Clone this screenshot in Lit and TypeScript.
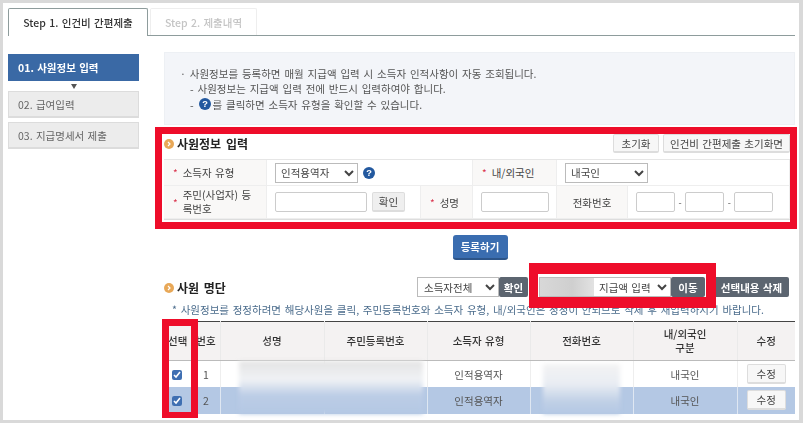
import { LitElement, html, css } from "lit";
import { customElement } from "lit/decorators.js";

const help = html`<svg class="help" viewBox="0 0 13 13" width="12" height="12"><circle cx="6.5" cy="6.5" r="6.5" fill="#23599f"/><text x="6.5" y="10.2" text-anchor="middle" font-size="10" font-weight="700" fill="#fff" font-family="Liberation Sans">?</text></svg>`;
const bullet = html`<svg class="bullet" viewBox="0 0 10 10" width="10" height="10"><circle cx="5" cy="5" r="5" fill="#e8a858"/><path d="M4 3l2 2-2 2" fill="none" stroke="#fff" stroke-width="1.2"/></svg>`;

@customElement("app-root")
export class AppRoot extends LitElement {
  static styles = css`
    :host { display: block; position: relative; width: 803px; height: 423px; overflow: hidden; background: #fff;
      font-family: "Noto Sans CJK KR", "Noto Sans", sans-serif; font-size: 10.5px; color: #555; word-spacing: 1px; }
    * { box-sizing: border-box; }
    .frame { width: 803px; height: 423px; border: solid #d9d9d9; border-width: 3px 4px 3px 3px; padding: 5px 4px 0 5px; display: flex; flex-direction: column; filter: blur(0.35px); }
    .tabs { display: flex; gap: 2px; height: 28px; border-bottom: 1px solid #8e9c9c; flex: none; }
    .tab { height: 27px; display: flex; align-items: center; justify-content: center; border: 1px solid #eee; border-bottom: 0; color: #c4c4c4; font-size: 10.5px; width: 107px; border-radius: 2px 2px 0 0; font-weight: 500; }
    .tab.on { width: 140px; height: 28px; border-color: #8e9c9c; color: #333; background: #fff; }
    .body { display: flex; gap: 25px; padding-top: 16px; flex: 1; }
    .side { width: 131px; flex: none; padding-top: 2px; display: flex; flex-direction: column; }
    .step { height: 27px; display: flex; align-items: center; padding-left: 9px; background: #ececec; border: 1px solid #dcdcdc; border-bottom-width: 2px; color: #666; font-size: 10.5px; margin-bottom: 4px; }
    .step.on { background: #3a69a5; border-color: #3a69a5; color: #fff; font-weight: 700; margin-bottom: 0; }
    .arrow { height: 10px; display: flex; justify-content: center; align-items: center; }
    .arrow i { border: 3.5px solid transparent; border-top: 5px solid #555; border-bottom: 0; width: 0; }
    .main { width: 631px; flex: none; }
    .info { height: 73px; background: #f3f5f9; border: 1px solid #edf0f4; padding: 13px 16px 0 15px; font-size: 10.5px; word-spacing: 1.5px; line-height: 15.3px; color: #555; }
    .info div { display: flex; align-items: center; white-space: pre; }
    .info .sub { padding-left: 10px; }
    .info .help { margin: 0 2px 0 1px; }
    .head { display: flex; align-items: center; height: 34px; padding-top: 3px; }
    .head h2 { margin: 0 0 0 3px; font-size: 12px; word-spacing: 2px; font-weight: 700; color: #222; flex: 1; }
    .bullet { flex: none; margin-top: 1px; }
    .gbtn { height: 19px; display: inline-flex; align-items: center; justify-content: center; background: #f7f7f7; border: 1px solid #ddd; border-bottom-width: 2px; border-radius: 2px; color: #444; font-size: 10.5px; word-spacing: 1px; font-family: inherit; padding: 0; white-space: nowrap; }
    .reset { width: 46px; margin-right: 4px; }
    .reset2 { width: 127px; margin-right: 5px; }
    .form { display: grid; grid-template-columns: 103px 154px 52px 84px 71px 162px; grid-template-rows: 26px 33px; border-top: 1px solid #e6e6e6; border-bottom: 1px solid #ddd; width: 626px; }
    .form > div { display: flex; align-items: center; border-bottom: 1px solid #eee; border-right: 1px solid #eee; }
    .form .l { background: #f9f8f7; font-size: 10.5px; color: #444; }
    .form .l.p { padding-left: 9px; gap: 5px; }
    .form .l.c { justify-content: center; }
    .form .l.star-tight { padding-left: 9px; gap: 5px; }
    .form .v { padding-left: 8px; gap: 5px; }
    .form .span2 { grid-column: span 2; }
    .star { color: #d9304a; font-size: 10px; flex: none; }
    .lbl2 { line-height: 14px; width: 72px; word-break: break-all; }
    select { font-family: inherit; font-size: 10.5px; word-spacing: 1px; height: 20px; background: #fff; border: 1px solid #bbb; color: #444; padding: 0 0 0 1px; border-radius: 0; }
    .sel1 { width: 83px; }
    .in { height: 20px; border: 1px solid #ccc; background: #fff; border-radius: 2px; flex: none; padding: 0; }
    .in1 { width: 92px; } .in2 { width: 68px; } .in3 { width: 39px; }
    .phone { gap: 3.5px !important; font-size: 9px; }
    .cbtn { width: 33px; height: 20px; background: #efefef; }
    .regwrap { display: flex; justify-content: center; padding: 15px 0 0 1px; }
    .reg { width: 55px; height: 25px; background: #3a6db0; color: #fff; font-weight: 700; font-size: 10.5px; border: 0; border-bottom: 2px solid #2c5488; border-radius: 3px; font-family: inherit; padding: 0; word-spacing: 1px; }
    .bar { display: flex; align-items: center; height: 20px; margin-top: 17px; }
    .bar .t { display: flex; align-items: center; gap: 3px; width: 253px; flex: none; }
    .bar h2 { margin: 0; font-size: 12px; word-spacing: 2px; font-weight: 700; color: #222; }
    .dbtn { height: 20px; background: #5c6570; color: #fff; border: 0; border-radius: 2px; font-family: inherit; font-weight: 700; font-size: 10.5px; word-spacing: 1px; padding: 0; }
    .s1 { width: 82px; height: 20px; padding-left: 2px; }
    .ok { width: 29px; margin-right: 11px; }
    .s2 { width: 132px; height: 20px; padding-left: 55px; }
    .selwrap { position: relative; display: flex; }
    .smudge { position: absolute; left: 1px; top: 1px; width: 54px; height: 18px; background: linear-gradient(90deg, #d8d8d8, #cfcfcf 60%, #e2e2e2); }
    .go { width: 34px; margin-right: 9px; }
    .del { width: 75px; }
    .note { color: #4b6c8c; font-size: 10.5px; word-spacing: 1.4px; margin: 5px 0 0 8px; height: 19px; line-height: 16px; white-space: nowrap; }
    .tw { position: relative; }
    table { border-collapse: collapse; width: 631px; table-layout: fixed; border-top: 1px solid #444; }
    th { height: 39px; background: #f4f2f2; font-weight: 500; font-size: 10.5px; color: #333; border-right: 1px solid #eaeaea; border-bottom: 1px solid #bbb; line-height: 14px; padding: 0; }
    th:last-child, td:last-child { border-right: 0; }
    td { height: 26.5px; text-align: center; font-size: 10.5px; color: #555; border-right: 1px solid #eee; padding: 0; }
    tr.sel td { background: #b4c8e4; border-right-color: #dfe7f2; }
    input[type="checkbox"] { width: 10px; height: 10px; margin: 0 2px 2px 0; accent-color: #3f6fb2; vertical-align: middle; }
    .edit { width: 39px; height: 20px; }
    .blur { position: absolute; filter: blur(2px); pointer-events: none; }
    .b1 { left: 75px; top: 40px; width: 184px; height: 53px; background: linear-gradient(180deg, #e4e4e4 0%, #f0f2f5 35%, #bccde6 65%, #b4c8e4 100%); }
    .b2 { left: 379px; top: 43px; width: 77px; height: 50px; background: linear-gradient(180deg, #f3f3f3 0%, #e9edf3 40%, #c0d0e6 75%, #b4c8e4 100%); }
    .redbox { position: absolute; border-style: solid; border-color: #ee0d2a; pointer-events: none; }
    .r1 { left: 155px; top: 127px; width: 642px; height: 102px; border-width: 7px; }
    .r2 { left: 529px; top: 263px; width: 187px; height: 45px; border-width: 11px 10px 11px 9px; }
    .r3 { left: 162px; top: 319px; width: 36px; height: 99px; border-width: 7px 7px 6px 7px; }
  `;

  private row(n: number, sel: boolean) {
    return html`<tr class=${sel ? "sel" : ""}>
      <td><input type="checkbox" checked /></td><td>${n}</td><td></td><td></td><td>인적용역자</td><td></td><td>내국인</td>
      <td><button class="gbtn edit">수정</button></td></tr>`;
  }

  render() {
    return html`
      <div class="frame">
        <div class="tabs"><div class="tab on">Step 1. 인건비 간편제출</div><div class="tab">Step 2. 제출내역</div></div>
        <div class="body">
          <div class="side">
            <div class="step on">01. 사원정보 입력</div>
            <div class="arrow"><i></i></div>
            <div class="step">02. 급여입력</div>
            <div class="step">03. 지급명세서 제출</div>
          </div>
          <div class="main">
            <div class="info">
              <div>· 사원정보를 등록하면 매월 지급액 입력 시 소득자 인적사항이 자동 조회됩니다.</div>
              <div class="sub">- 사원정보는 지급액 입력 전에 반드시 입력하여야 합니다.</div>
              <div class="sub">- ${help}를 클릭하면 소득자 유형을 확인할 수 있습니다.</div>
            </div>
            <div class="head">${bullet}<h2>사원정보 입력</h2><button class="gbtn reset">초기화</button><button class="gbtn reset2">인건비 간편제출 초기화면</button></div>
            <div class="form">
              <div class="l p"><span class="star">*</span>소득자 유형</div>
              <div class="v span2"><select class="sel1"><option>인적용역자</option></select>${help}</div>
              <div class="l star-tight"><span class="star">*</span>내/외국인</div>
              <div class="v span2"><select class="sel1"><option>내국인</option></select></div>
              <div class="l p"><span class="star">*</span><span class="lbl2">주민(사업자) 등록번호</span></div>
              <div class="v"><div class="in in1"></div><button class="gbtn cbtn">확인</button></div>
              <div class="l star-tight"><span class="star">*</span>성명</div>
              <div class="v"><div class="in in2"></div></div>
              <div class="l c">전화번호</div>
              <div class="v phone"><div class="in in3"></div>-<div class="in in3"></div>-<div class="in in3"></div></div>
            </div>
            <div class="regwrap"><button class="reg">등록하기</button></div>
            <div class="bar">
              <div class="t">${bullet}<h2>사원 명단</h2></div>
              <select class="s1"><option>소득자전체</option></select><button class="dbtn ok">확인</button>
              <div class="selwrap"><select class="s2"><option>지급액 입력</option></select><div class="smudge"></div></div><button class="dbtn go">이동</button>
              <button class="dbtn del">선택내용 삭제</button>
            </div>
            <div class="note">* 사원정보를 정정하려면 해당사원을 클릭, 주민등록번호와 소득자 유형, 내/외국인은 정정이 안되므로 삭제 후 재입력하시기 바랍니다.</div>
            <div class="tw">
              <table>
                <colgroup><col style="width:28px"/><col style="width:28px"/><col style="width:104px"/><col style="width:103px"/><col style="width:103px"/><col style="width:103px"/><col style="width:104px"/><col style="width:58px"/></colgroup>
                <thead><tr><th>선택</th><th>번호</th><th>성명</th><th>주민등록번호</th><th>소득자 유형</th><th>전화번호</th><th>내/외국인<br/>구분</th><th>수정</th></tr></thead>
                <tbody>${this.row(1, false)}${this.row(2, true)}</tbody>
              </table>
              <div class="blur b1"></div>
              <div class="blur b2"></div>
            </div>
          </div>
        </div>
      </div>
      <div class="redbox r1"></div><div class="redbox r2"></div><div class="redbox r3"></div>
    `;
  }
}
